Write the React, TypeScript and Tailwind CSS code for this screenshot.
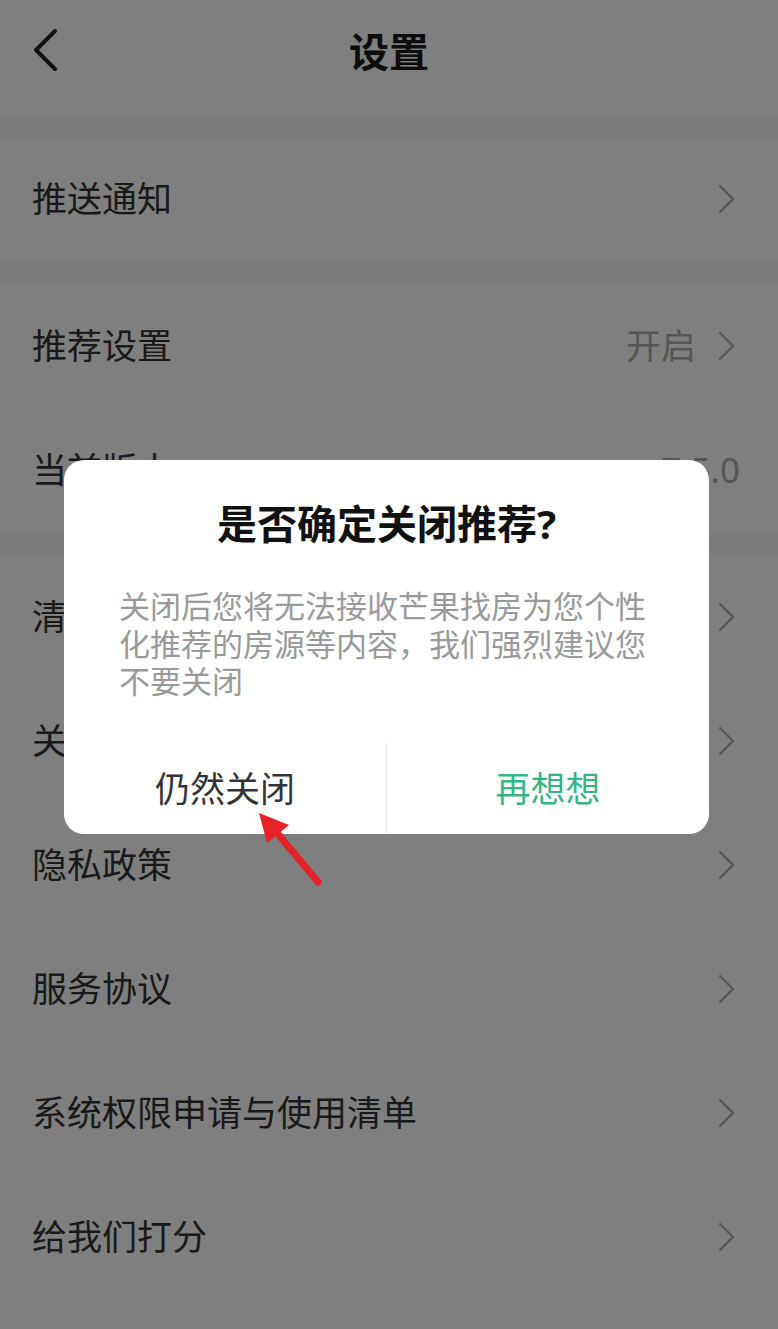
import React from "react";

const font = { fontFamily: '"Noto Sans", "Noto Sans CJK SC", sans-serif' };

type Row = { label: string; value?: string; chevron?: boolean };

const groups: Row[][] = [
  [{ label: "推送通知", chevron: true }],
  [
    { label: "推荐设置", value: "开启", chevron: true },
    { label: "当前版本", value: "7.5.0" },
  ],
  [
    { label: "清除缓存", chevron: true },
    { label: "关于我们", chevron: true },
    { label: "隐私政策", chevron: true },
    { label: "服务协议", chevron: true },
    { label: "系统权限申请与使用清单", chevron: true },
    { label: "给我们打分", chevron: true },
  ],
];

const Chevron = () => (
  <svg width="18" height="30" viewBox="0 0 18 30" fill="none" className="ml-[22px]">
    <polyline points="2,2 15,15 2,28" stroke="#b0b0b0" strokeWidth="2.4" strokeLinecap="round" strokeLinejoin="round" />
  </svg>
);

const SettingRow = ({ row }: { row: Row }) => (
  <div className="flex h-[124px] items-center justify-between bg-white pb-[3px] pl-[32px] pr-[42px]">
    <span className="text-[35px] leading-none text-[#333]">{row.label}</span>
    <div className="flex items-center">
      {row.value && (
        <span className={`text-[35px] leading-none text-[#aaa] ${row.chevron ? "" : "-mr-[4px]"}`}>{row.value}</span>
      )}
      {row.chevron && <Chevron />}
    </div>
  </div>
);

export default function App() {
  return (
    <div className="relative h-[1329px] w-full overflow-hidden bg-white" style={font}>
      {/* header */}
      <div className="relative flex h-[115px] items-center justify-center bg-white">
        <svg width="28" height="44" viewBox="0 0 28 44" fill="none" className="absolute left-[31px] top-[28px]">
          <polyline points="24,3 5,22 24,41" stroke="#222" strokeWidth="4" strokeLinecap="round" strokeLinejoin="round" />
        </svg>
        <h1 className="-mt-[12px] text-[40px] font-bold text-[#1a1a1a]">设置</h1>
      </div>

      {groups.map((g, i) => (
        <div key={i}>
          <div className="h-[23px] bg-[#f8f8f8]" />
          {g.map((row) => (
            <SettingRow key={row.label} row={row} />
          ))}
        </div>
      ))}

      {/* mask */}
      <div className="absolute inset-0 bg-black/50" />

      {/* dialog */}
      <div className="absolute left-[64px] top-[460px] w-[645px] overflow-hidden rounded-[20px] bg-white">
        <h2 className="pt-[42px] text-center text-[40px] font-bold leading-[44px] text-[#111]">是否确定关闭推荐?</h2>
        <p className="mt-[42px] px-[55px] text-[31px] leading-[37.5px] text-[#999]">
          关闭后您将无法接收芒果找房为您个性化推荐的房源等内容，我们强烈建议您不要关闭
        </p>
        <div className="mt-[41px] flex h-[92px]">
          <button className="flex-1 pt-[4px] text-[35px] text-[#333]">仍然关闭</button>
          <div className="w-[1px] bg-[#e8e8e8]" />
          <button className="flex-1 pt-[4px] text-[35px] text-[#34b584]">再想想</button>
        </div>
      </div>

      {/* red arrow annotation */}
      <svg width="90" height="100" viewBox="0 0 90 100" className="absolute left-[250px] top-[800px]">
        <line x1="28" y1="34" x2="68" y2="82" stroke="#e52228" strokeWidth="7" strokeLinecap="round" />
        <polygon points="9,13 17,43 39,25" fill="#e52228" />
      </svg>
    </div>
  );
}
